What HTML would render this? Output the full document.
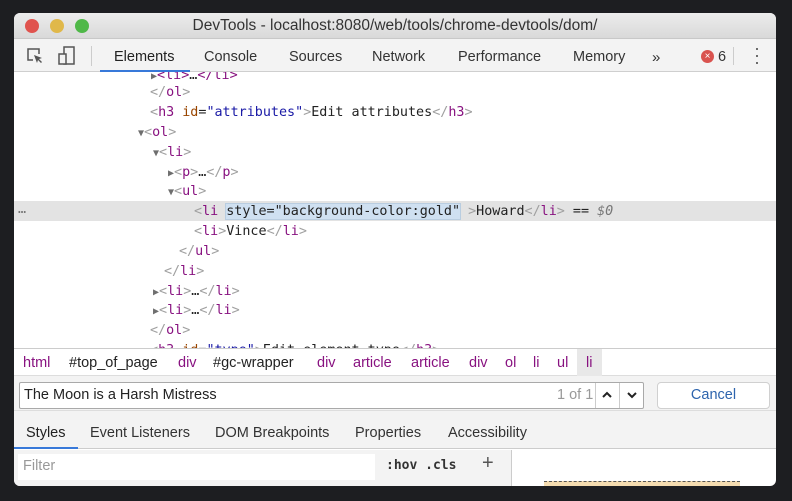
<!DOCTYPE html>
<html><head><meta charset="utf-8"><style>
*{box-sizing:border-box;margin:0;padding:0}
body{width:792px;height:501px;background:#1d1e21;position:relative;overflow:hidden;font-family:"Liberation Sans",sans-serif}
.win{position:absolute;left:14px;top:13px;width:762px;height:473px;background:#fff;border-radius:6px;overflow:hidden}
.title{position:absolute;left:0;top:0;width:100%;height:26px;background:linear-gradient(#ececec,#d9d9d9);border-bottom:1px solid #c8c8c8;text-align:center;font-size:15.5px;line-height:26px;color:#333}
.dot{position:absolute;top:6px;width:14px;height:14px;border-radius:50%}
.tb{position:absolute;left:0;top:26px;width:100%;height:33px;background:#f3f3f3;border-bottom:1px solid #cfcfcf;font-size:14.5px;color:#333}
.tb span{position:absolute;top:10px}
.dom{position:absolute;left:0;top:59px;width:100%;height:276px;font-family:"DejaVu Sans Mono",monospace;font-size:13.4px;color:#222;overflow:hidden}
.ln{position:absolute;height:20px;line-height:20px;white-space:pre;margin-top:2px}
.t{color:#881280}.a{color:#994500}.v{color:#1a1aa6}.g{color:#a0a0a0}
.tri{color:#6e6e6e;font-size:10px}
.bc{position:absolute;left:0;top:335px;width:100%;height:28px;background:#fff;border-top:1px solid #ccc;border-bottom:1px solid #ddd;font-size:14.5px;line-height:29px;color:#881280}
.bc span{position:absolute}
.sr{position:absolute;left:0;top:363px;width:100%;height:35px;background:#f3f3f3;border-bottom:1px solid #ddd}
.tabs2{position:absolute;left:0;top:398px;width:100%;height:38px;background:#f3f3f3;border-bottom:1px solid #ccc;font-size:14.5px;color:#333}
.tabs2 span{position:absolute;top:14px}
</style></head><body>
<div class="win">
<div class="title">
<div class="dot" style="left:11px;background:#e0534e"></div>
<div class="dot" style="left:36px;background:#e0b84a"></div>
<div class="dot" style="left:61px;background:#4fb848"></div>
DevTools - localhost:8080/web/tools/chrome-devtools/dom/</div>
<div class="tb">
<svg style="position:absolute;left:12px;top:8px" width="18" height="18" viewBox="0 0 18 18"><path d="M7 13H2V2h11v5" fill="none" stroke="#555" stroke-width="1.5"/><path d="M8 8l8 3-3 1 3 3-1 1-3-3-1 3z" fill="#555"/></svg>
<svg style="position:absolute;left:44px;top:7px" width="18" height="20" viewBox="0 0 18 20"><rect x="6" y="1" width="10" height="17" fill="none" stroke="#555" stroke-width="1.5"/><rect x="1" y="8" width="7" height="10" fill="#f3f3f3" stroke="#555" stroke-width="1.5"/></svg>
<div style="position:absolute;left:77px;top:7px;width:1px;height:20px;background:#ccc"></div>
<span style="left:100px;color:#222">Elements</span>
<div style="position:absolute;left:86px;top:31px;width:90px;height:2px;background:#3879d9"></div>
<span style="left:190px">Console</span>
<span style="left:275px">Sources</span>
<span style="left:358px">Network</span>
<span style="left:444px">Performance</span>
<span style="left:559px">Memory</span>
<span style="left:638px;font-size:15px">»</span>
<div style="position:absolute;left:687px;top:11px;width:13px;height:13px;border-radius:50%;background:#d9534f;color:#fff;font-size:10px;line-height:13px;text-align:center">×</div>
<span style="left:704px">6</span>
<div style="position:absolute;left:719px;top:8px;width:1px;height:18px;background:#ccc"></div>
<span style="left:740px;top:6px;font-size:18px;line-height:7px;color:#555">·<br>·<br>·</span>
</div>
<div class="dom">
<div class="ln" style="left:137px;top:-8px"><span class="tri">▶</span><span class="t">&lt;li&gt;</span>…<span class="t">&lt;/li&gt;</span></div>
<div class="ln" style="left:136px;top:9px"><span class="g">&lt;/</span><span class="t">ol</span><span class="g">&gt;</span></div>
<div class="ln" style="left:136px;top:29px"><span class="g">&lt;</span><span class="t">h3</span> <span class="a">id</span>=<span class="v">"attributes"</span><span class="g">&gt;</span>Edit attributes<span class="g">&lt;/</span><span class="t">h3</span><span class="g">&gt;</span></div>
<div class="ln" style="left:124px;top:49px"><span class="tri">▼</span><span class="g">&lt;</span><span class="t">ol</span><span class="g">&gt;</span></div>
<div class="ln" style="left:139px;top:69px"><span class="tri">▼</span><span class="g">&lt;</span><span class="t">li</span><span class="g">&gt;</span></div>
<div class="ln" style="left:154px;top:89px"><span class="tri">▶</span><span class="g">&lt;</span><span class="t">p</span><span class="g">&gt;</span>…<span class="g">&lt;/</span><span class="t">p</span><span class="g">&gt;</span></div>
<div class="ln" style="left:154px;top:108px"><span class="tri">▼</span><span class="g">&lt;</span><span class="t">ul</span><span class="g">&gt;</span></div>
<div style="position:absolute;left:0;top:129px;width:100%;height:20px;background:#e3e3e3"></div>
<div class="ln" style="left:4px;top:126px;color:#777">…</div>
<div class="ln" style="left:180px;top:128px"><span class="g">&lt;</span><span class="t">li</span> <span style="background:#cfe0f1;outline:1px solid #b9cde0;color:#222">style="background-color:gold"</span> <span class="g">&gt;</span>Howard<span class="g">&lt;/</span><span class="t">li</span><span class="g">&gt;</span> == <i style="color:#777">$0</i></div>
<div class="ln" style="left:180px;top:148px"><span class="g">&lt;</span><span class="t">li</span><span class="g">&gt;</span>Vince<span class="g">&lt;/</span><span class="t">li</span><span class="g">&gt;</span></div>
<div class="ln" style="left:165px;top:168px"><span class="g">&lt;/</span><span class="t">ul</span><span class="g">&gt;</span></div>
<div class="ln" style="left:150px;top:188px"><span class="g">&lt;/</span><span class="t">li</span><span class="g">&gt;</span></div>
<div class="ln" style="left:139px;top:208px"><span class="tri">▶</span><span class="g">&lt;</span><span class="t">li</span><span class="g">&gt;</span>…<span class="g">&lt;/</span><span class="t">li</span><span class="g">&gt;</span></div>
<div class="ln" style="left:139px;top:227px"><span class="tri">▶</span><span class="g">&lt;</span><span class="t">li</span><span class="g">&gt;</span>…<span class="g">&lt;/</span><span class="t">li</span><span class="g">&gt;</span></div>
<div class="ln" style="left:136px;top:247px"><span class="g">&lt;/</span><span class="t">ol</span><span class="g">&gt;</span></div>
<div class="ln" style="left:136px;top:267px"><span class="g">&lt;</span><span class="t">h3</span> <span class="a">id</span>=<span class="v">"type"</span><span class="g">&gt;</span>Edit element type<span class="g">&lt;/</span><span class="t">h3</span><span class="g">&gt;</span></div>
</div>
<div class="bc">
<span style="left:9px">html</span><span style="left:55px;color:#222">#top_of_page</span><span style="left:164px">div</span><span style="left:199px;color:#222">#gc-wrapper</span><span style="left:303px">div</span><span style="left:339px">article</span><span style="left:397px">article</span><span style="left:455px">div</span><span style="left:491px">ol</span><span style="left:519px">li</span><span style="left:543px">ul</span>
<div style="position:absolute;left:563px;top:0;width:25px;height:27px;background:#e8e8e8"></div><span style="left:572px">li</span>
</div>
<div class="sr">
<div style="position:absolute;left:5px;top:6px;width:625px;height:27px;background:#fff;border:1px solid #a9a9a9;border-radius:2px"></div>
<div style="position:absolute;left:10px;top:11px;font-size:14.5px;color:#222">The Moon is a Harsh Mistress</div>
<div style="position:absolute;left:543px;top:11px;font-size:14.5px;color:#999">1 of 1</div>
<div style="position:absolute;left:581px;top:7px;width:1px;height:25px;background:#ccc"></div>
<div style="position:absolute;left:605px;top:7px;width:1px;height:25px;background:#ccc"></div>
<svg style="position:absolute;left:587px;top:14px" width="12" height="10"><path d="M2 7l4-4 4 4" fill="none" stroke="#222" stroke-width="2"/></svg>
<svg style="position:absolute;left:612px;top:14px" width="12" height="10"><path d="M2 3l4 4 4-4" fill="none" stroke="#222" stroke-width="2"/></svg>
<div style="position:absolute;left:643px;top:6px;width:113px;height:27px;background:#fff;border:1px solid #d0d0d0;border-radius:4px;text-align:center;font-size:14.5px;line-height:25px;color:#2d64ad">Cancel</div>
</div>
<div class="tabs2">
<span style="left:12px;color:#222">Styles</span>
<div style="position:absolute;left:0;top:36px;width:64px;height:2px;background:#3879d9"></div>
<span style="left:76px">Event Listeners</span><span style="left:201px">DOM Breakpoints</span><span style="left:341px">Properties</span><span style="left:434px">Accessibility</span>
</div>
<div style="position:absolute;left:0;top:437px;width:497px;height:36px;background:#f3f3f3"></div>
<div style="position:absolute;left:4px;top:441px;width:357px;height:26px;background:#fff"></div>
<div style="position:absolute;left:9px;top:445px;font-size:14.5px;color:#999">Filter</div>
<div style="position:absolute;left:372px;top:445px;font-family:'DejaVu Sans Mono',monospace;font-size:13px;font-weight:bold;color:#333">:hov .cls</div>
<div style="position:absolute;left:468px;top:439px;font-size:20px;color:#555">+</div>
<div style="position:absolute;left:497px;top:437px;width:1px;height:36px;background:#ccc"></div>
<div style="position:absolute;left:530px;top:468px;width:196px;height:6px;border-top:1px dashed #555;background:#f5dcb0"></div>
</div>
</body></html>
